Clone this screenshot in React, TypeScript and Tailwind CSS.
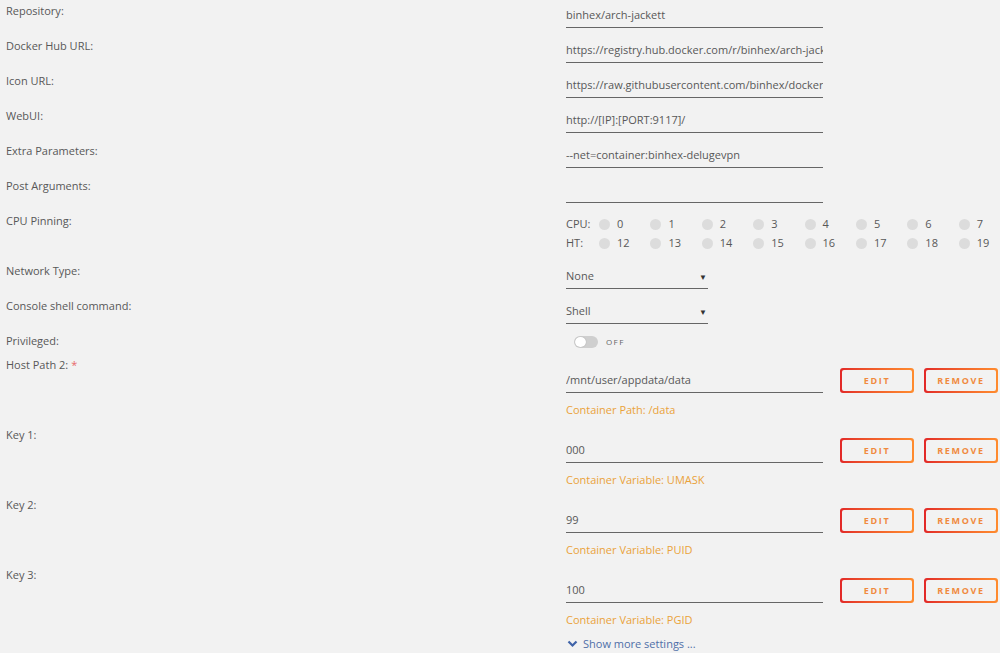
import React from "react";

type TextRowProps = { label: string; value: string };

function TextRow({ label, value }: TextRowProps) {
  return (
    <div className="flex h-[35px]">
      <div className="w-[566px] shrink-0 pl-[6px] pt-[3px] leading-[16px]">{label}</div>
      <div className="w-[257px] h-[28px] shrink-0 pt-[7px] leading-[16px] border-b border-[#666] overflow-hidden whitespace-nowrap">
        {value}
      </div>
    </div>
  );
}

function SelectRow({ label, value }: TextRowProps) {
  return (
    <div className="flex h-[35px]">
      <div className="w-[566px] shrink-0 pl-[6px] pt-[3px] leading-[16px]">{label}</div>
      <div className="w-[142px] h-[29px] shrink-0 pt-[8px] leading-[16px] border-b border-[#666] flex justify-between">
        <span>{value}</span>
        <span className="text-[8px] text-[#333] pr-[1px] pt-[1px]">▼</span>
      </div>
    </div>
  );
}

function GradientButton({ text }: { text: string }) {
  return (
    <div className="w-[74px] h-[25px] shrink-0 rounded-[3px] p-[2px] bg-gradient-to-r from-[#e22828] to-[#ff8c2f]">
      <div className="w-full h-full rounded-[2px] bg-[#f2f2f2] flex items-center justify-center text-[9px] font-bold tracking-[1.7px] text-[#f08a3e]">
        {text}
      </div>
    </div>
  );
}

type ConfigProps = { label: string; value: string; note: string; required?: boolean };

function ConfigBlock({ label, value, note, required }: ConfigProps) {
  return (
    <div className="flex h-[70px]">
      <div className="w-[566px] shrink-0 pl-[6px] pt-[3px] leading-[16px]">
        {label}
        {required && <span className="text-[#e86a6a] ml-[3px]">*</span>}
      </div>
      <div className="flex flex-col">
        <div className="flex mt-[14px]">
          <div className="w-[257px] h-[25px] pt-[4px] leading-[16px] border-b border-[#666] whitespace-nowrap overflow-hidden">
            {value}
          </div>
          <div className="flex gap-[10px] ml-[17px]">
            <GradientButton text="EDIT" />
            <GradientButton text="REMOVE" />
          </div>
        </div>
        <div className="mt-[9px] leading-[16px] text-[#eaa23a]">{note}</div>
      </div>
    </div>
  );
}

const cpuRow = [0, 1, 2, 3, 4, 5, 6, 7];
const htRow = [12, 13, 14, 15, 16, 17, 18, 19];

function PinLine({ label, cores }: { label: string; cores: number[] }) {
  return (
    <div className="flex items-center h-[19px]">
      <span className="w-[33px] shrink-0">{label}</span>
      {cores.map((c) => (
        <div key={c} className="w-[51.4px] shrink-0 flex items-center">
          <span className="w-[11px] h-[11px] rounded-full bg-[#dcdcdc] shrink-0" />
          <span className="ml-[7px]">{c}</span>
        </div>
      ))}
    </div>
  );
}

export default function App() {
  return (
    <div className="w-[1000px] h-[653px] overflow-hidden bg-[#f2f2f2] text-[#585858] text-[11px] font-['Open_Sans',sans-serif]">
      <TextRow label="Repository:" value="binhex/arch-jackett" />
      <TextRow label="Docker Hub URL:" value="https://registry.hub.docker.com/r/binhex/arch-jackett/" />
      <TextRow label="Icon URL:" value="https://raw.githubusercontent.com/binhex/docker-templates/master/binhex/images/jackett-icon.png" />
      <TextRow label="WebUI:" value="http://[IP]:[PORT:9117]/" />
      <TextRow label="Extra Parameters:" value="--net=container:binhex-delugevpn" />
      <TextRow label="Post Arguments:" value="" />

      <div className="flex h-[50px]">
        <div className="w-[566px] shrink-0 pl-[6px] pt-[3px] leading-[16px]">CPU Pinning:</div>
        <div className="pt-[5px]">
          <PinLine label="CPU:" cores={cpuRow} />
          <PinLine label="HT:" cores={htRow} />
        </div>
      </div>

      <SelectRow label="Network Type:" value="None" />
      <SelectRow label="Console shell command:" value="Shell" />

      <div className="flex h-[24px]">
        <div className="w-[566px] shrink-0 pl-[6px] pt-[3px] leading-[16px]">Privileged:</div>
        <div className="flex items-center pt-[1px] h-[22px] ml-[8px]">
          <div className="w-[24px] h-[12px] rounded-full bg-[#cfcfcf] flex items-center p-[1px]">
            <span className="w-[11px] h-[10px] rounded-full bg-white shadow-[0_0_1px_rgba(0,0,0,0.3)]" />
          </div>
          <span className="ml-[8px] text-[8px] tracking-[1.4px] text-[#666]">OFF</span>
        </div>
      </div>

      <ConfigBlock label="Host Path 2:" required value="/mnt/user/appdata/data" note="Container Path: /data" />
      <ConfigBlock label="Key 1:" value="000" note="Container Variable: UMASK" />
      <ConfigBlock label="Key 2:" value="99" note="Container Variable: PUID" />
      <ConfigBlock label="Key 3:" value="100" note="Container Variable: PGID" />

      <div className="flex pt-[2px] pl-[567px] leading-[16px] text-[#4f6fa8] items-center">
        <svg width="11" height="8" viewBox="0 0 11 8" className="mr-[5px]">
          <path d="M1.5 1.5 L5.5 5.5 L9.5 1.5" stroke="#3f63a8" strokeWidth="2.2" fill="none" />
        </svg>
        <span>Show more settings ...</span>
      </div>
    </div>
  );
}
